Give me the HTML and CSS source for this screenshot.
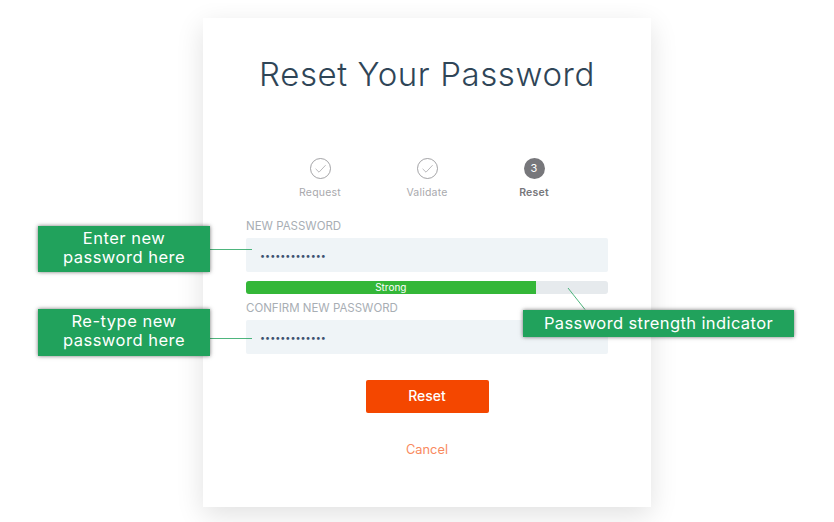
FILE: index.html
```html
<!DOCTYPE html>
<html lang="en">
<head>
<meta charset="utf-8">
<title>Reset Your Password</title>
<link rel="stylesheet" href="styles.css">
</head>
<body>
<div class="page">
  <div class="topline"></div>
  <main class="card">
    <h1 class="title">Reset Your Password</h1>
    <ol class="steps">
      <li class="step">
        <svg class="step-icon" viewBox="0 0 21 21"><circle cx="10.5" cy="10.5" r="10" fill="none" stroke="#8b8b8f" stroke-width="0.8"/><path d="M5.6 10.8l3.4 3.4 6.6-7" fill="none" stroke="#a8a8ac" stroke-width="0.8"/></svg>
        <span class="step-label">Request</span>
      </li>
      <li class="step">
        <svg class="step-icon" viewBox="0 0 21 21"><circle cx="10.5" cy="10.5" r="10" fill="none" stroke="#8b8b8f" stroke-width="0.8"/><path d="M5.6 10.8l3.4 3.4 6.6-7" fill="none" stroke="#a8a8ac" stroke-width="0.8"/></svg>
        <span class="step-label">Validate</span>
      </li>
      <li class="step step-current">
        <span class="step-num">3</span>
        <span class="step-label">Reset</span>
      </li>
    </ol>
    <form class="form">
      <label class="field-label" for="np">NEW PASSWORD</label>
      <input class="field" id="np" type="password" value="1234567890123">
      <div class="strength"><div class="strength-fill">Strong</div></div>
      <label class="field-label" for="cp">CONFIRM NEW PASSWORD</label>
      <input class="field" id="cp" type="password" value="1234567890123">
      <button class="btn" type="button">Reset</button>
      <a class="cancel" href="#">Cancel</a>
    </form>
  </main>

  <svg class="leaders" viewBox="0 0 834 522">
    <path d="M210 249.5H252M210 338.5H252M568 288L585 309.5" fill="none" stroke="#21a25c" stroke-width="0.8"/>
  </svg>
  <div class="callout callout-new">Enter new<br>password here</div>
  <div class="callout callout-confirm">Re-type new<br>password here</div>
  <div class="callout callout-strength">Password strength indicator</div>
</div>
</body>
</html>
```
FILE: styles.css
```css
* { box-sizing: border-box; }
html, body { margin: 0; padding: 0; background: #fff; }
body { font-family: "Inter", "Liberation Sans", sans-serif; overflow: hidden; }

.page {
  position: relative;
  width: 834px;
  height: 522px;
  display: flex;
  flex-direction: column;
  align-items: flex-start;
  overflow: hidden;
}
.topline { position: relative; z-index: 1; width: 100%; height: 3px; background: #fff; flex: none; }

.card {
  flex: none;
  width: 448px;
  height: 489px;
  margin: 15px 0 0 203px;
  padding: 0 43px;
  background: #fff;
  box-shadow: 0 8px 26px rgba(0, 0, 0, 0.12);
  display: flex;
  flex-direction: column;
}
.title {
  margin: 35px 0 0;
  height: 42px;
  line-height: 42px;
  font-size: 33px;
  font-weight: 300;
  letter-spacing: 0.6px;
  color: #2f4557;
  text-align: center;
  white-space: nowrap;
}

.steps {
  list-style: none;
  margin: 63px 0 0;
  padding: 0 20px;
  display: grid;
  grid-template-columns: repeat(3, 107px);
  justify-content: center;
}
.step { display: flex; flex-direction: column; align-items: center; }
.step-icon, .step-num { width: 21px; height: 21px; flex: none; display: block; }
.step-num {
  border-radius: 50%;
  background: #77777b;
  color: #fff;
  font-size: 11px;
  line-height: 21px;
  text-align: center;
}
.step-label {
  margin-top: 7px;
  height: 13px;
  line-height: 13px;
  font-size: 10.5px;
  letter-spacing: 0.2px;
  color: #a9a9ad;
}
.step-current .step-label { color: #77777b; font-weight: 600; }

.form { display: flex; flex-direction: column; margin-top: 19px; }
.field-label {
  height: 16px;
  line-height: 16px;
  font-size: 11.5px;
  color: #a8aeb4;
  margin-bottom: 4px;
}
.strength + .field-label { margin-top: 6px; }
.field {
  width: 100%;
  height: 34px;
  flex: none;
  border: 0;
  border-radius: 2px;
  background: #eff4f7;
  padding: 0 14px;
  font-family: "Inter", sans-serif;
  font-size: 9px;
  color: #3d5270;
  outline: none;
}
.strength {
  margin-top: 9px;
  height: 13px;
  flex: none;
  border-radius: 3px;
  background: #e6eaed;
  overflow: hidden;
}
.strength-fill {
  width: 80%;
  height: 100%;
  background: #34b738;
  color: #fff;
  font-size: 10px;
  line-height: 13px;
  text-align: center;
}
.btn {
  align-self: center;
  margin-top: 26px;
  width: 123px;
  height: 33px;
  padding: 0 0 2px;
  flex: none;
  border: 0;
  border-radius: 2px;
  background: #f44700;
  color: #fff;
  font-family: "Inter", sans-serif;
  font-size: 14px;
  font-weight: 500;
}
.cancel {
  align-self: center;
  margin-top: 29px;
  height: 16px;
  line-height: 16px;
  font-size: 12.8px;
  color: #f98a5e;
  text-decoration: none;
}

.leaders { position: absolute; left: 0; top: 0; width: 834px; height: 522px; pointer-events: none; }
.callout {
  position: absolute;
  background: #21a25c;
  color: #fff;
  text-align: center;
  font-size: 16.5px;
  line-height: 19px;
  letter-spacing: 0.5px;
  box-shadow: 0 0 4px rgba(0, 0, 0, 0.55);
  display: flex;
  align-items: center;
  justify-content: center;
}
.callout-new { left: 38px; top: 226px; width: 172px; height: 46px; padding-bottom: 2px; }
.callout-confirm { left: 38px; top: 309px; width: 172px; height: 47px; padding-bottom: 4px; }
.callout-strength { left: 523px; top: 310px; width: 271px; height: 27px; letter-spacing: 0.4px; }
```
